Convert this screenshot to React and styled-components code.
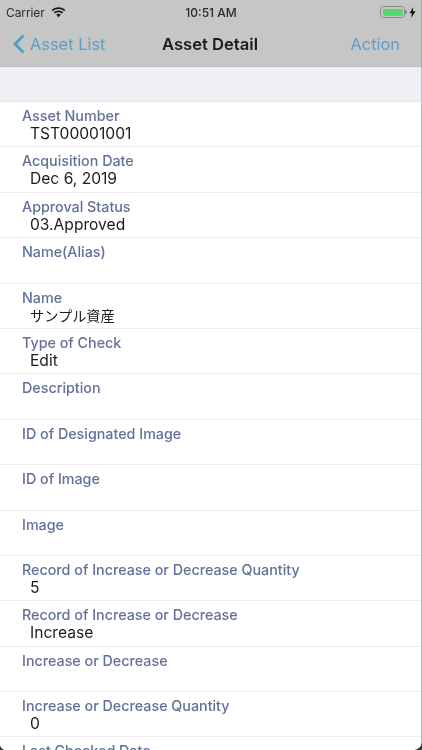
import React from 'react';
import styled, { createGlobalStyle } from 'styled-components';

const GlobalStyle = createGlobalStyle`
  html, body {
    margin: 0;
    padding: 0;
    background: #ffffff;
    overflow: hidden;
  }
  * {
    box-sizing: border-box;
  }
`;

const Screen = styled.div`
  position: relative;
  width: 422px;
  height: 750px;
  overflow: hidden;
  background: #ffffff;
  font-family: Inter, 'Liberation Sans', 'Noto Sans CJK JP', sans-serif;
  filter: blur(0.35px);
`;

const Header = styled.header`
  height: 67px;
  background: #c6c6c6;
  border-bottom: 1px solid #bdbdbd;
`;

const StatusBar = styled.div`
  display: grid;
  grid-template-columns: 1fr auto 1fr;
  align-items: center;
  height: 24px;
  padding: 0 6px;
  color: #2a2a2a;
  font-size: 12px;
`;

const StatusLeft = styled.div`
  display: flex;
  align-items: center;
  gap: 6px;
  letter-spacing: -0.1px;
`;

const StatusTime = styled.div`
  font-weight: 500;
`;

const StatusRight = styled.div`
  display: flex;
  justify-content: flex-end;
  align-items: center;
  gap: 4px;
`;

const Battery = styled.div`
  position: relative;
  width: 25px;
  height: 12px;
  padding: 1.5px;
  border: 1px solid #8c8c8c;
  border-radius: 3.5px;

  &:after {
    content: '';
    position: absolute;
    top: 3px;
    right: -3px;
    width: 2px;
    height: 4px;
    background: #8c8c8c;
    border-radius: 0 1px 1px 0;
  }
`;

const BatteryFill = styled.div`
  height: 100%;
  border-radius: 2px;
  background: #55d86c;
`;

const NavBar = styled.nav`
  display: grid;
  grid-template-columns: 1fr auto 1fr;
  align-items: center;
  height: 40px;
  padding: 0 22px 0 12px;
`;

const BackLink = styled.div`
  display: flex;
  align-items: center;
  gap: 5px;
  color: #5a9fc6;
  font-size: 16.4px;
`;

const NavTitle = styled.div`
  margin-left: 8px;
  color: #1b1b1b;
  font-size: 16.6px;
  font-weight: 600;
`;

const ActionLink = styled.div`
  color: #5a9fc6;
  font-size: 16.4px;
  text-align: right;
`;

const SectionGap = styled.div`
  height: 35px;
  background: #f0eff5;
  border-bottom: 1px solid #e6e6ea;
`;

const FieldRow = styled.div`
  height: 45.4px;
  padding: 5px 22px 0;
  border-bottom: 1px solid #ececef;
`;

const FieldLabel = styled.div`
  color: #63709a;
  font-size: 14.3px;
  font-weight: 500;
  line-height: 17px;
`;

const FieldValue = styled.div`
  padding-left: 8px;
  color: #1c1c1c;
  font-size: ${({ $cjk }) => ($cjk ? '14.2px' : '15.6px')};
  line-height: 19px;
`;

const EdgeLine = styled.div`
  position: absolute;
  top: 0;
  right: 0;
  width: 1px;
  height: 100%;
  background: #7f959e;
  opacity: 0.55;
`;

const Corner = styled.div`
  position: absolute;
  bottom: 0;
  ${({ $side }) => $side}: 0;
  width: ${({ $size }) => $size}px;
  height: ${({ $size }) => $size}px;
  background: radial-gradient(
    circle at ${({ $side }) => ($side === 'left' ? '100% 0' : '0 0')},
    transparent ${({ $size }) => $size - 0.5}px,
    #2c3a40 ${({ $size }) => $size}px
  );
`;

const fields = [
  { label: 'Asset Number', value: 'TST00001001' },
  { label: 'Acquisition Date', value: 'Dec 6, 2019' },
  { label: 'Approval Status', value: '03.Approved' },
  { label: 'Name(Alias)', value: '' },
  { label: 'Name', value: 'サンプル資産', cjk: true },
  { label: 'Type of Check', value: 'Edit' },
  { label: 'Description', value: '' },
  { label: 'ID of Designated Image', value: '' },
  { label: 'ID of Image', value: '' },
  { label: 'Image', value: '' },
  { label: 'Record of Increase or Decrease Quantity', value: '5' },
  { label: 'Record of Increase or Decrease', value: 'Increase' },
  { label: 'Increase or Decrease', value: '' },
  { label: 'Increase or Decrease Quantity', value: '0' },
  { label: 'Last Checked Date', value: '' },
];

const App = () => (
  <Screen>
    <GlobalStyle />
    <Header>
      <StatusBar>
        <StatusLeft>
          Carrier
          <svg width="15" height="11" viewBox="0 0 16 12" fill="#1c1c1c">
            <path d="M8 2.200c2.400 0 4.600.9 6.200 2.500l1.200-1.300C13.500 1.400 10.900.3 8 .3S2.500 1.400.6 3.400l1.200 1.300C3.400 3.100 5.600 2.200 8 2.200z" />
            <path d="M8 5.600c1.500 0 2.900.6 3.900 1.600l1.200-1.300C11.800 4.600 10 3.800 8 3.800s-3.800.8-5.100 2.100l1.200 1.300c1-1 2.400-1.600 3.900-1.600z" />
            <path d="M8 7.300c-1 0-1.800.4-2.400 1L8 11.500l2.400-3.200c-.6-.6-1.400-1-2.400-1z" />
          </svg>
        </StatusLeft>
        <StatusTime>10:51 AM</StatusTime>
        <StatusRight>
          <Battery>
            <BatteryFill />
          </Battery>
          <svg width="7" height="11" viewBox="0 0 7 11" fill="#111">
            <path d="M4.200 0 .5 6.200h2.400L2.200 11l4.300-6.800H3.900z" />
          </svg>
        </StatusRight>
      </StatusBar>
      <NavBar>
        <BackLink>
          <svg width="13" height="20" viewBox="0 0 13 20" fill="none" stroke="#4b9dc9" strokeWidth="2.800">
            <path d="M11.500 1.500 3 10l8.500 8.500" />
          </svg>
          Asset List
        </BackLink>
        <NavTitle>Asset Detail</NavTitle>
        <ActionLink>Action</ActionLink>
      </NavBar>
    </Header>
    <SectionGap />
    {fields.map(({ label, value, cjk }) => (
      <FieldRow key={label}>
        <FieldLabel>{label}</FieldLabel>
        <FieldValue $cjk={cjk}>{value}</FieldValue>
      </FieldRow>
    ))}
    <EdgeLine />
    <Corner $side="left" $size={5} />
    <Corner $side="right" $size={8} />
  </Screen>
);

export default App;
